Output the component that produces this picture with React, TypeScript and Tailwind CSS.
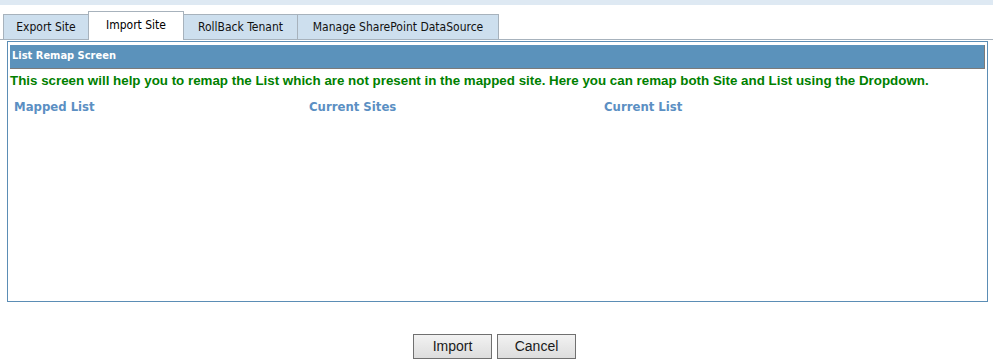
import React from 'react';

const tabs = [
  { label: 'Export Site', w: 'w-[86px]' },
  { label: 'Import Site', w: 'w-[96px]' },
  { label: 'RollBack Tenant', w: 'w-[115px]' },
  { label: 'Manage SharePoint DataSource', w: 'w-[202px]' },
];
const columns = ['Mapped List', 'Current Sites', 'Current List'];

function TabStrip({ active }: { active: number }) {
  return (
    <div className="flex items-end h-[35px] pl-[3px] border-b border-[#a7b2bc]">
      {tabs.map((t, i) =>
        i === active ? (
          <div
            key={t.label}
            className={`${t.w} h-[29px] -mb-px -ml-px flex items-center justify-center bg-white border border-b-0 border-[#a7b2bc] text-[12px] text-black`}
          >
            <span className="-mt-[3px]">{t.label}</span>
          </div>
        ) : (
          <div
            key={t.label}
            className={`${t.w} h-[25px] flex items-center justify-center bg-[#cddfee] border border-b-0 border-[#a7b2bc] text-[12px] text-[#111] -ml-px first:ml-0`}
          >
            {t.label}
          </div>
        )
      )}
    </div>
  );
}

export default function App() {
  return (
    <div
      className="w-[993px] h-[364px] bg-white overflow-hidden"
      style={{ fontFamily: '"DejaVu Sans Condensed", Tahoma, "DejaVu Sans", sans-serif' }}
    >
      {/* top band */}
      <div className="h-[5px] bg-[#dee9f3]" />

      <TabStrip active={1} />

      {/* panel */}
      <div className="ml-[7px] mr-[5px] mt-px h-[261px] border border-[#5b8db5] px-[2px] pt-[3px]">
        <div className="h-[24px] bg-[#5b92bb] border-r border-b border-[#7a7a7a] flex items-center pl-[2px] text-[11px] font-bold text-white">
          List Remap Screen
        </div>
        <p
          className="mt-[4px] text-[13.35px] font-bold text-[#008000] leading-[16px]"
          style={{ fontFamily: '"Liberation Sans", Arial, sans-serif' }}
        >
          This screen will help you to remap the List which are not present in the mapped site. Here you can remap both Site and List using the Dropdown.
        </p>
        <div className="grid grid-cols-[295px_295px_1fr] pl-[4px] mt-[8px]">
          {columns.map((c) => (
            <div key={c} className="text-[13px] font-bold text-[#5b8fc3]">
              {c}
            </div>
          ))}
        </div>
      </div>

      {/* buttons */}
      <div className="flex justify-center gap-[5px] mt-[32px] pr-[4px]">
        {['Import', 'Cancel'].map((b) => (
          <button
            key={b}
            className="w-[79px] h-[25px] border border-[#707070] bg-gradient-to-b from-[#f2f2f2] to-[#dddddd] text-[14px] text-[#1a1a1a]"
            style={{ fontFamily: '"Liberation Sans", Arial, sans-serif' }}
          >
            {b}
          </button>
        ))}
      </div>
    </div>
  );
}
